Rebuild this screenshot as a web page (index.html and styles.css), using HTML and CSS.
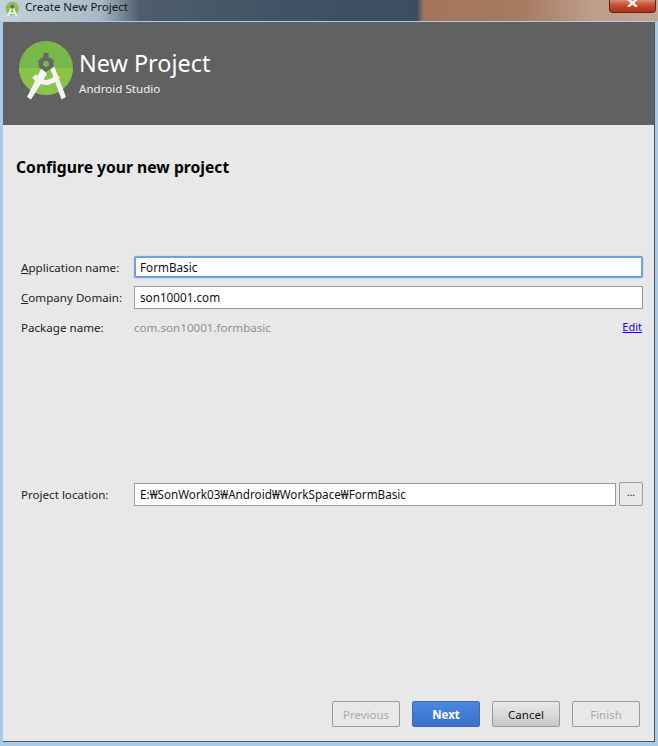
FILE: index.html
```html
<!DOCTYPE html>
<html lang="en">
<head>
<meta charset="utf-8">
<title>Create New Project</title>
<link rel="stylesheet" href="styles.css">
</head>
<body>
<div class="window">
  <header class="titlebar">
    <svg class="title-icon" viewBox="0 0 60 62" width="15" height="16">
      <circle cx="29" cy="29" r="27" fill="#8cc152"/>
      <path d="M27 24 L11 60 M31 24 L47 60 M17 44 Q29 54 41 44" fill="none" stroke="#fff" stroke-width="6"/>
      <circle cx="29" cy="22" r="8" fill="#666"/>
    </svg>
    <span class="title-text">Create New Project</span>
    <div class="close-btn">
      <svg class="close-x" viewBox="0 0 11 7" width="11" height="7">
        <path d="M1 -1 L10 7 M10 -1 L1 7" fill="none" stroke="#f4f0ee" stroke-width="2.400"/>
      </svg>
    </div>
  </header>
  <main class="dialog">
    <section class="banner">
      <svg class="logo" viewBox="0 0 60 62" width="60" height="62">
        <circle cx="29" cy="29" r="27" fill="#78b84a"/>
        <path d="M2 29 A27 27 0 0 0 56 29 Z" fill="#8bc34a"/>
        <path d="M24.500 29 L10 58 L14 60.500 L30 35 Z M33 29 L44.500 60.500 L49 58 L37.500 28 Z" fill="#f4f4f4"/>
        <path d="M17 37 Q29 50 41 37" fill="none" stroke="#f4f4f4" stroke-width="5"/>
        <path d="M26.500 14 H31.500 V18 L36.500 21 V28 L29 33 L21.500 28 V21 L26.500 18 Z" fill="#666"/>
        <circle cx="29" cy="25" r="3" fill="#78b84a"/>
      </svg>
      <div class="banner-text">
        <div class="banner-title">New Project</div>
        <div class="banner-sub">Android Studio</div>
      </div>
    </section>
    <section class="content">
      <h1 class="heading">Configure your new project</h1>
      <div class="field field-app">
        <label class="label"><u>A</u>pplication name:</label>
        <div class="input input-focus">FormBasic</div>
      </div>
      <div class="field field-company">
        <label class="label"><u>C</u>ompany Domain:</label>
        <div class="input">son10001.com</div>
      </div>
      <div class="field field-package">
        <span class="label">Package name:</span>
        <span class="package-value">com.son10001.formbasic</span>
        <a class="edit-link" href="#">Edit</a>
      </div>
      <div class="field field-location">
        <span class="label">Project location:</span>
        <div class="input">E:₩SonWork03₩Android₩WorkSpace₩FormBasic</div>
        <button class="browse">...</button>
      </div>
      <footer class="actions">
        <button class="btn btn-disabled">Previous</button>
        <button class="btn btn-primary">Next</button>
        <button class="btn btn-default">Cancel</button>
        <button class="btn btn-disabled">Finish</button>
      </footer>
    </section>
  </main>
</div>
</body>
</html>
```
FILE: styles.css
```css
* { box-sizing: border-box; }
html, body { margin: 0; padding: 0; }
body {
  width: 658px;
  height: 746px;
  overflow: hidden;
  font-family: "Noto Sans", "Noto Sans CJK KR", sans-serif;
}
.window {
  width: 658px;
  height: 746px;
  display: flex;
  flex-direction: column;
  padding: 0 3px 4px 3px;
  background: #a9cbe8;
}
.titlebar {
  height: 21px;
  margin: 0 -3px;
  padding: 1px 0 0 5px;
  display: flex;
  align-items: flex-start;
  position: relative;
  background: linear-gradient(90deg, #c3d2dc 0, #a9bac6 100px, #4d5d6b 140px, #3f5163 300px, #3c4d60 417px, #a3765c 424px, #a67a5f 520px, #bd9c88 590px, #c4a592 658px);
}
.title-icon { flex: none; }
.title-text {
  margin-left: 5px;
  font-size: 11.500px;
  line-height: 12px;
  color: #10181f;
}
.close-btn {
  position: absolute;
  left: 609px;
  top: 0;
  width: 47px;
  height: 13px;
  background: linear-gradient(180deg, #d98a72 0, #c9452a 50%, #a8341c 100%);
  border: 1px solid #5e2a20;
  border-top: none;
  border-radius: 0 0 4px 4px;
  display: flex;
  justify-content: center;
  align-items: flex-start;
  overflow: hidden;
}
.close-x { flex: none; }
.dialog {
  flex: 1;
  margin-top: 1px;
  display: flex;
  flex-direction: column;
  min-height: 0;
  border-right: 1px solid #555;
  border-bottom: 1px solid #555;
}
.banner {
  height: 103px;
  flex: none;
  background: #616161;
  display: flex;
  padding: 17px 0 0 14px;
}
.logo { flex: none; }
.banner-text { margin-left: 2px; color: #fff; }
.banner-title {
  font-size: 23.400px;
  line-height: 32px;
  margin-top: 8px;
}
.banner-sub {
  font-size: 11.600px;
  line-height: 16px;
  margin-top: 2px;
  color: #f2f2f2;
}
.content {
  flex: 1;
  background: #e8e8e8;
  display: flex;
  flex-direction: column;
  padding: 0 11px 0 18px;
  min-height: 0;
  font-size: 11.600px;
  color: #1c1c1c;
}
.heading {
  margin: 31px 0 0 -5px;
  font-size: 15.700px;
  line-height: 22px;
  font-weight: 700;
  color: #000;
}
.field { display: flex; align-items: center; }
.label { width: 113px; flex: none; font-size: 11.600px; color: #222; }
.input {
  flex: 1;
  height: 23px;
  background: #fff;
  border: 1px solid #9a9a9a;
  padding-left: 5px;
  line-height: 21px;
  font-size: 11.700px;
  color: #111;
}
.input-focus {
  height: 22px;
  border: 2px solid #6ea3e0;
  box-shadow: 0 0 2px #9dc2ec;
  padding-left: 4px;
  line-height: 18px;
  border-radius: 2px;
}
.field-app { margin-top: 78px; }
.field-company { margin-top: 8px; }
.field-package { margin-top: 8px; height: 20px; }
.package-value { color: #909090; }
.edit-link { margin-left: auto; margin-right: 1px; color: #2200ee; font-size: 11px; margin-top: -2px; }
.field-location { margin-top: 145px; }
.browse {
  flex: none;
  width: 24px;
  height: 24px;
  margin-left: 3px;
  padding: 0 0 4px;
  background: #e8e8e8;
  border: 1px solid #9a9a9a;
  border-radius: 2px;
  font: 10px "Noto Sans", sans-serif;
  color: #222;
}
.actions {
  margin-top: auto;
  margin-bottom: 14px;
  margin-right: 3px;
  display: flex;
  justify-content: flex-end;
  gap: 12px;
}
.btn {
  width: 68px;
  height: 26px;
  padding: 0;
  border: 1px solid #9a9a9a;
  border-radius: 2px;
  font: 11.500px "Noto Sans", sans-serif;
}
.btn-disabled { background: #e8e8e8; color: #aaa; }
.btn-primary {
  background: linear-gradient(180deg, #4a87e0, #3a70c8);
  border-color: #3a6cb8;
  color: #fff;
  font-weight: 700;
}
.btn-default {
  background: linear-gradient(180deg, #eaeaea, #c8c8c8);
  color: #111;
}
```
